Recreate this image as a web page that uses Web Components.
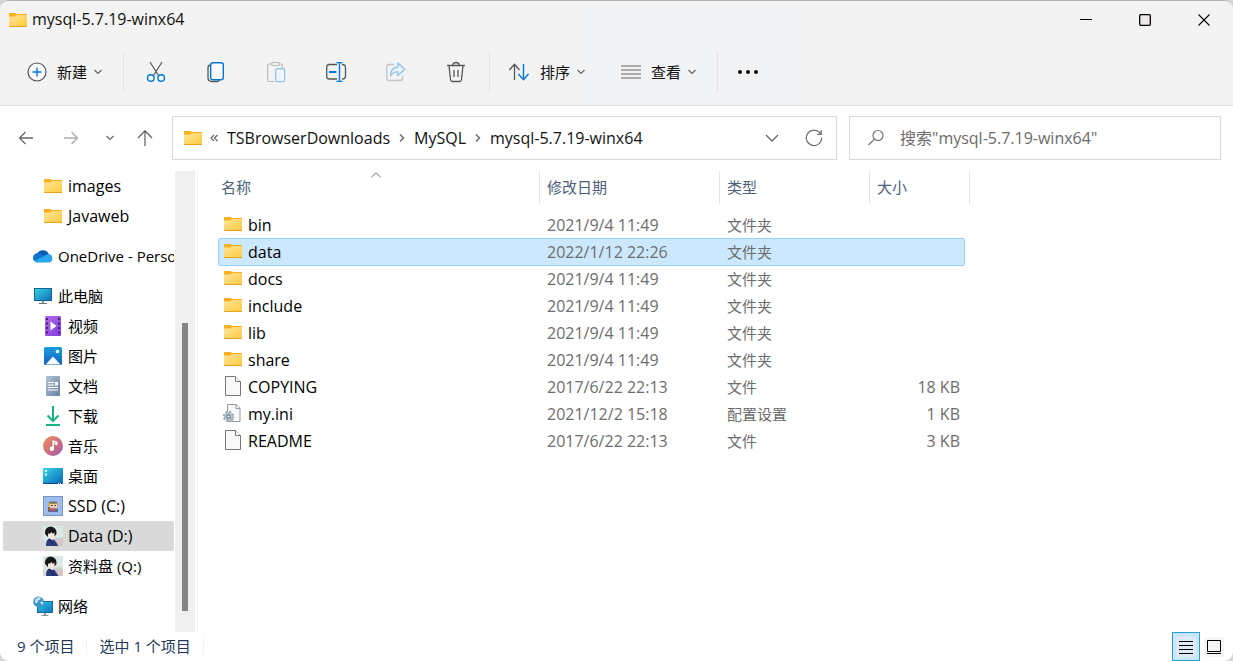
<!DOCTYPE html>
<html lang="zh-CN">
<head>
<meta charset="utf-8">
<title>mysql-5.7.19-winx64</title>
<style>
  html, body { margin: 0; height: 100%; }
  body { background: #d6d6d6; font: 16px/20px "Open Sans", "Noto Sans CJK SC", sans-serif; color: #111; overflow: hidden; }
</style>
</head>
<body>
<fe-window></fe-window>

<script>
const ICONS = {
  folder: [20, 20, `<defs><linearGradient id="g" x1="0" y1="0" x2="1" y2="1"><stop offset="0" stop-color="#ffe49a"/><stop offset="1" stop-color="#ffcb3d"/></linearGradient></defs>
    <path d="M1 6V3.500Q1 3 1.500 3H7q.5 0 .8.3L9 4h10v2z" fill="#f7ae20"/>
    <rect x="1" y="5" width="18" height="12" fill="url(#g)"/><path d="M1 6.500h6L9 5H1z" fill="#fbb01c"/><rect x="1" y="16" width="18" height="1" fill="#e9a21c"/>`],
  file: [20, 22, `<path d="M2.500 1.500h10l5 5v14h-15z" fill="#f9f9fa" stroke="#777"/><path d="M12.500 1.500v5h5" fill="#fff" stroke="#777"/>`],
  ini: [20, 22, `<path d="M4.500 2.500h9l3.500 3.500v13.500h-12.500z" fill="#f6f7f9" stroke="#999"/><path d="M13 2.500v4h4" fill="#fff" stroke="#999"/>
    <circle cx="5.500" cy="14.500" r="4.500" fill="#bcc6cf"/><circle cx="5.500" cy="14.500" r="4.700" fill="none" stroke="#9eabb6" stroke-width="2" stroke-dasharray="2 1.700"/><circle cx="5.500" cy="14.500" r="1.700" fill="#f3f5f7" stroke="#46515b"/>
    <circle cx="8.500" cy="18" r="2" fill="#aab4bd"/>`],
  plus: [20, 20, `<circle cx="10" cy="10" r="9" fill="#fafafa" stroke="#555" stroke-width="1.200"/><path d="M10 5.500v9M5.500 10h9" stroke="#0078d4" stroke-width="1.400"/>`],
  cut: [20, 22, `<path d="M4 1l8.800 14M16 1L7.200 15" stroke="#555" stroke-width="1.200" fill="none"/><circle cx="4.800" cy="17" r="3.300" fill="none" stroke="#0078d4" stroke-width="1.400"/><circle cx="15.200" cy="17" r="3.300" fill="none" stroke="#0078d4" stroke-width="1.400"/>`],
  copy: [20, 22, `<path d="M4 4q-2 .5-2 2.500v10q0 4 4 4h5q2 0 2.500-1.500" fill="none" stroke="#555" stroke-width="1.300"/><rect x="4.700" y="1.700" width="12.600" height="17" rx="2.300" fill="#fafafa" stroke="#0078d4" stroke-width="1.400"/>`],
  paste: [20, 22, `<g fill="none" stroke="#bbb" stroke-width="1.200"><path d="M6 3H3Q1.600 3 1.600 4.500v14.500q0 1.500 1.400 1.500h5M13 3h2q1.500 0 1.500 1.500V7"/><rect x="5.500" y="1.500" width="8" height="3" rx="1.500"/></g><rect x="9.700" y="7.700" width="9" height="13" rx="1.500" fill="#f0f5fa" stroke="#93c2ea" stroke-width="1.300"/>`],
  rename: [22, 22, `<path d="M12 3.500H4Q1.700 3.500 1.700 6v9.500Q1.700 18 4 18h8M17 3.500q3.500 0 3.500 3v8.500q0 3-3.500 3" fill="none" stroke="#555" stroke-width="1.300"/><path d="M4 11h7.500" stroke="#0078d4" stroke-width="2"/><path d="M14.500 2v18M11.500 1.600h6M11.500 20.400h6" stroke="#0078d4" stroke-width="1.400" fill="none"/>`],
  share: [22, 22, `<path d="M9 3.500H4Q1.700 3.500 1.700 6v11Q1.700 19.500 4 19.500h11q2.500 0 2.500-2.500v-2" fill="none" stroke="#c4c4c4" stroke-width="1.300"/><path d="M12.800 2l7 6.300-7 6.200v-3.700Q8 10.500 5.500 15q0-8.500 7.300-9z" fill="#eaf3fb" stroke="#93c2ea" stroke-width="1.300" stroke-linejoin="round"/>`],
  trash: [20, 22, `<path d="M1 4.500h18M6.800 4.500q0-3 3.200-3t3.200 3M3 4.500l1.500 14q.2 2 2 2h7q1.800 0 2-2l1.500-14M8 9v7M12 9v7" fill="none" stroke="#555" stroke-width="1.300"/>`],
  sort: [22, 20, `<path d="M6.500 18V2.500M1.300 8l5.200-5.700L11.500 8" fill="none" stroke="#555" stroke-width="1.300"/><path d="M15.500 2v15.500M10.300 12l5.200 5.700 5-5.700" fill="none" stroke="#0078d4" stroke-width="1.400"/>`],
  lines: [20, 18, `<path d="M0 3h20M0 7h20M0 11h20M0 15h20" stroke="#666" stroke-width="1.200"/>`],
  dots: [22, 6, `<g fill="#111"><circle cx="3" cy="3" r="2"/><circle cx="11" cy="3" r="2"/><circle cx="19" cy="3" r="2"/></g>`],
  down: [8, 6, `<path d="M.5 1l3.500 3.500L7.500 1" fill="none" stroke="#666" stroke-width="1.200"/>`],
  downbig: [14, 8, `<path d="M1 1l6 6 6-6" fill="none" stroke="#666" stroke-width="1.300"/>`],
  up: [10, 6, `<path d="M.5 5.200L5 .8l4.500 4.400" fill="none" stroke="#666"/>`],
  right: [6, 10, `<path d="M1 1.500L4.500 5 1 8.500" fill="none" stroke="#666" stroke-width="1.400"/>`],
  more: [8, 8, `<path d="M4 1L1 4l3 3M7.500 1l-3 3 3 3" fill="none" stroke="#666" stroke-width="1.200"/>`],
  back: [16, 16, `<path d="M15 8H1.500M7.500 2L1.500 8l6 6" fill="none" stroke="#666" stroke-width="1.300"/>`],
  forward: [16, 16, `<path d="M1 8h13.500M8.500 2l6 6-6 6" fill="none" stroke="#aaa" stroke-width="1.300"/>`],
  goup: [18, 18, `<path d="M9 17V1.700M2 9l7-7.300L16 9" fill="none" stroke="#666" stroke-width="1.300"/>`],
  refresh: [18, 18, `<path d="M16.700 8.800A7.700 7.700 0 1 1 14 3l1.800 1.700M16.200 1v4.300H12" fill="none" stroke="#707070" stroke-width="1.200"/>`],
  search: [18, 18, `<circle cx="11" cy="6.500" r="5" fill="none" stroke="#777" stroke-width="1.200"/><path d="M7.300 10.300L1.500 16" stroke="#777" stroke-width="1.200"/>`],
  min: [12, 12, `<path d="M0 5.500h12" stroke="#000"/>`],
  max: [12, 12, `<rect x=".7" y=".7" width="10.600" height="10.600" rx="1" fill="#ede9ec" stroke="#000" stroke-width="1.300"/>`],
  close: [12, 12, `<path d="M.5.5l11 11M11.500.5l-11 11" stroke="#111" stroke-width="1.200"/>`],
  cloud: [20, 20, `<path d="M4 8A6.500 6.500 0 0 1 15.500 7.500L17 15H3z" fill="#0a5fb4"/><circle cx="4.600" cy="11.800" r="4.600" fill="#0f73cf"/><path d="M4 7.200q3-.4 5 1.300l4 3-6 4H3z" fill="#0f73cf"/><path d="M15.200 8A4.300 4.300 0 0 1 16 16.500H5q-2 0-3.500-1.500L12 9.500z" fill="#28a8ea"/>`],
  pc: [20, 20, `<defs><linearGradient id="g" x1="0" y1="0" x2="1" y2="1"><stop offset="0" stop-color="#34d3e0"/><stop offset="1" stop-color="#0f6fc0"/></linearGradient></defs><rect x="1.500" y="2.500" width="17" height="12" fill="url(#g)" stroke="#16618f"/><path d="M9 15h2v2H9z" fill="#8a949c"/><path d="M6 17.500h8" stroke="#68737c"/>`],
  video: [20, 20, `<defs><linearGradient id="g" x1="0" y1="0" x2="1" y2="1"><stop offset="0" stop-color="#b86be8"/><stop offset="1" stop-color="#7a3ddc"/></linearGradient></defs><rect x="2" width="16" height="20" rx="1" fill="url(#g)"/><path d="M4 2v17M16 2v17" stroke="#43207a" stroke-width="2" stroke-dasharray="2 2.500"/><path d="M7.500 5.500l6 4.500-6 4.500z" fill="#fff"/>`],
  picture: [20, 20, `<defs><linearGradient id="g" x1="0" y1="0" x2="0" y2="1"><stop offset="0" stop-color="#1b9de2"/><stop offset="1" stop-color="#0f63bd"/></linearGradient></defs><rect x="1" y="1" width="18" height="18" rx="1.500" fill="url(#g)"/><path d="M2.500 18.500l7.500-8 7.500 8z" fill="#f4f9fd"/><circle cx="14.500" cy="5.500" r="1.700" fill="#fff"/>`],
  doc: [20, 20, `<defs><linearGradient id="g" x1="0" y1="0" x2="1" y2="1"><stop offset="0" stop-color="#b3c5d6"/><stop offset="1" stop-color="#647f9d"/></linearGradient></defs><rect x="3" width="14" height="20" rx="1" fill="url(#g)"/><path d="M5 6.500h6M5 9h6M5 11.500h10M5 14h10" stroke="#fff" stroke-width="1.200"/><rect x="12" y="6" width="3" height="3.500" fill="#fff"/>`],
  download: [20, 20, `<path d="M10 0v15M4.500 9.500L10 15l5.500-5.500" fill="none" stroke="#16b387" stroke-width="2"/><path d="M3 19h14" stroke="#16b387" stroke-width="2"/>`],
  music: [20, 20, `<defs><linearGradient id="g" x1="0" y1="0" x2="1" y2="1"><stop offset="0" stop-color="#f0905a"/><stop offset=".6" stop-color="#c86a82"/><stop offset="1" stop-color="#9a5fc0"/></linearGradient></defs><circle cx="10" cy="10" r="10" fill="url(#g)"/><circle cx="8.800" cy="12.800" r="2.200" fill="#fff"/><path d="M10.200 13V5l3.500 1.200v2l-2.300-.7" fill="none" stroke="#fff" stroke-width="1.500"/>`],
  desktop: [20, 20, `<defs><linearGradient id="g" x1="0" y1="0" x2="1" y2="1"><stop offset="0" stop-color="#35d6e0"/><stop offset="1" stop-color="#0b63bd"/></linearGradient></defs><rect y="2" width="20" height="16" rx="1" fill="url(#g)"/><path d="M0 17h20q0 1-1 1H1q-1 0-1-1z" fill="#0b4687"/><path d="M2 4h2v2H2zM2 7.500h2v2H2zM15 17h1v1h-1zM17 17h1v1h-1z" fill="#e8fbff"/>`],
  ssd: [20, 20, `<rect x=".5" y=".5" width="19" height="19" fill="#9dbcf0" stroke="#7c93bd"/><path d="M5 6l3 2 2-3 3 3 2-3v5H5z" fill="#e7b23d"/><path d="M6 5.500h8v2H6z" fill="#69707f"/><rect x="7" y="8" width="7" height="4.500" fill="#f2c9a8"/><path d="M8 9.500h1.500M11.500 9.500H13" stroke="#333"/><path d="M5 12.500h10V16H5z" fill="#5c6c96"/><path d="M8 12.500h4V15H8z" fill="#d05248"/><path d="M5 11h2v3H5z" fill="#a9503f"/>`],
  avatar: [20, 20, `<path d="M0 0h20v20H0z" fill="#dbe9e4"/><path d="M11 13h9v7h-9z" fill="#d9c6c4"/><path d="M12 12.500h8" stroke="#c2d4d4" stroke-width="2"/><path d="M0 14h4v6H0z" fill="#d7d9d6"/><path d="M4 5.500h8v5q-2 3-5 3z" fill="#f5e6df"/><path d="M2 8Q1.500 1 7.500.5 14 1 13.500 8l-2 2.500V6.500L9.500 8 9 6 6 8 5 7v4z" fill="#17171d"/><path d="M3 20q0-7 3.500-7.500L9 14l2-.5 2 2.500 2.500 4z" fill="#2c3c80"/><path d="M6 13l3 4 3 3" stroke="#182252" fill="none"/>`],
  network: [20, 20, `<defs><linearGradient id="g" x1="0" y1="0" x2="1" y2="1"><stop offset="0" stop-color="#31c8df"/><stop offset="1" stop-color="#0f70c2"/></linearGradient></defs><rect x="4.500" y="5.500" width="15" height="11" fill="url(#g)" stroke="#1a6c9c"/><path d="M11 17h2v2h-2z" fill="#8a949c"/><path d="M8.500 19.500h7" stroke="#87939b"/><circle cx="5.500" cy="5.800" r="5.300" fill="#3f94c4"/><path d="M2 3.500q2-2.500 5-2.500l1 2-3 1.500-1 3-2-1zM7 6l3-.5q.5 2-1 3.500z" fill="#c5e5ef"/>`],
  details: [20, 20, `<rect width="20" height="20" rx="2" fill="#dcebf4"/><path d="M3 4.500h14M3 8.500h14M3 12.500h14M3 16.500h14" stroke="#000"/>`],
  tiles: [20, 20, `<rect width="20" height="20" rx="2" fill="#f5f5f5"/><path d="M3.500 3.500h13v11h-13zM3 16.500h14" fill="none" stroke="#000"/>`]
};

/* Base class: puts the class's styles and markup in an open shadow root. */
class FeElement extends HTMLElement {
  connectedCallback() {
    if (this.shadowRoot) return;
    this.attachShadow({ mode: "open" }).innerHTML =
      `<style>*{box-sizing:border-box}button{font:inherit;color:inherit;border:0;background:none;padding:0;margin:0}${this.styles}</style>${this.markup()}`;
  }
}

customElements.define("fe-icon", class extends FeElement {
  styles = `:host{display:inline-flex;flex:none}svg{display:block}`;
  markup() {
    const [w, h, body] = ICONS[this.getAttribute("name")];
    return `<svg width="${w}" height="${h}" viewBox="0 0 ${w} ${h}" aria-hidden="true">${body}</svg>`;
  }
});

customElements.define("fe-titlebar", class extends FeElement {
  styles = `:host{display:flex;align-items:center;height:37px;padding-left:8px}
    h1{font:inherit;margin:0 0 0 4px;flex:1;padding-bottom:1px}
    button{width:59px;height:36px;display:flex;align-items:center;justify-content:center}`;
  markup() {
    return `<fe-icon name="folder"></fe-icon><h1><slot></slot></h1>
      <button aria-label="最小化"><fe-icon name="min"></fe-icon></button>
      <button aria-label="最大化"><fe-icon name="max"></fe-icon></button>
      <button aria-label="关闭"><fe-icon name="close"></fe-icon></button>`;
  }
});

customElements.define("fe-tool", class extends FeElement {
  styles = `:host{display:flex}
    button{display:flex;align-items:center;justify-content:center;min-width:60px;height:40px;font-size:15px}
    .text{gap:10px}.menu{margin-left:-3px}`;
  markup() {
    const label = this.textContent.trim();
    return `<button class="${label ? "text" : ""}" aria-label="${this.getAttribute("label") || label}"${this.hasAttribute("disabled") ? " disabled" : ""}>
      <fe-icon name="${this.getAttribute("icon")}"></fe-icon>${label ? `<slot></slot><fe-icon class="menu" name="down"></fe-icon>` : ""}</button>`;
  }
});

customElements.define("fe-commands", class extends FeElement {
  styles = `:host{display:flex;align-items:center;height:68px;border-bottom:1px solid #dedede}
    .group{display:flex;align-items:center;height:40px;border-right:1px solid #e2e2e2}
    .new{padding:0 21px 0 27px}.edit{padding:0 3px 0 2px}.view{padding:0 21px 0 18px;gap:36px}.group:last-child{border:0}`;
  markup() {
    return `<div class="group new"><fe-tool icon="plus">新建</fe-tool></div>
      <div class="group edit">
        <fe-tool icon="cut" label="剪切"></fe-tool><fe-tool icon="copy" label="复制"></fe-tool>
        <fe-tool icon="paste" label="粘贴" disabled></fe-tool><fe-tool icon="rename" label="重命名"></fe-tool>
        <fe-tool icon="share" label="共享" disabled></fe-tool><fe-tool icon="trash" label="删除"></fe-tool></div>
      <div class="group view"><fe-tool icon="sort">排序</fe-tool><fe-tool icon="lines">查看</fe-tool></div>
      <div class="group"><fe-tool icon="dots" label="更多"></fe-tool></div>`;
  }
});

customElements.define("fe-address", class extends FeElement {
  styles = `:host{display:flex;height:65px;padding:10px 12px 11px 18px;gap:12px}
    .history{display:flex;align-items:center;width:142px;gap:29px;flex:none}
    .history button{display:flex}.history button:nth-child(3){margin:0 -7px 0 -2px}
    .box{display:flex;align-items:center;border:1px solid #d9d9d9;background:#fff;height:44px}
    .path{flex:665 665 665px;padding:0 13px 0 10px;min-width:0}
    .path a{color:inherit;text-decoration:none;white-space:nowrap}
    .trail{display:flex;align-items:center;gap:9px;flex:1;padding-left:7px;min-width:0}
    .path button{display:flex;margin-left:26px}
    .find{flex:372 372 372px;padding-left:17px;gap:15px}
    input{flex:1;min-width:0;border:0;outline:0;padding:0;background:none;font:inherit}
    input::placeholder{color:#6b6b6b;opacity:1}`;
  markup() {
    return `<div class="history">
        <button aria-label="后退"><fe-icon name="back"></fe-icon></button>
        <button aria-label="前进" disabled><fe-icon name="forward"></fe-icon></button>
        <button aria-label="最近位置"><fe-icon name="down"></fe-icon></button>
        <button aria-label="向上"><fe-icon name="goup"></fe-icon></button></div>
      <div class="box path"><fe-icon name="folder"></fe-icon>
        <nav class="trail" aria-label="路径"><fe-icon name="more"></fe-icon><a href="#">TSBrowserDownloads</a><fe-icon name="right"></fe-icon>
        <a href="#">MySQL</a><fe-icon name="right"></fe-icon><a href="#">mysql-5.7.19-winx64</a></nav>
        <button aria-label="历史记录"><fe-icon name="downbig"></fe-icon></button>
        <button aria-label="刷新"><fe-icon name="refresh"></fe-icon></button></div>
      <label class="box find"><fe-icon name="search"></fe-icon><input type="text" aria-label="搜索" placeholder='搜索"mysql-5.7.19-winx64"'></label>`;
  }
});

customElements.define("fe-nav-item", class extends FeElement {
  styles = `:host{display:block}
    a{display:flex;align-items:center;gap:5px;height:30px;margin-left:3px;padding-left:40px;border-radius:2px;color:#000;text-decoration:none;white-space:nowrap;overflow:hidden}
    :host([root]) a{padding-left:30px}
    :host([small]) a{font-size:15px}
    :host([selected]) a{background:#d9d9d9}
    :host([root]){margin-top:10px}`;
  markup() { return `<a href="#"><fe-icon name="${this.getAttribute("icon")}"></fe-icon><slot></slot></a>`; }
});

customElements.define("fe-nav", class extends FeElement {
  styles = `:host{display:flex;width:198px;flex:none;overflow:hidden;border-right:1px solid #f3f3f3}
    nav{width:174px;overflow:hidden}
    .bar{width:20px;margin-left:1px;background:#f0f0f0;display:flex;flex-direction:column;align-items:center}
    .bar::before{content:"";flex:152}
    .thumb{width:6px;flex:288;background:#858585}
    .bar::after{content:"";flex:21}`;
  markup() { return `<nav aria-label="文件夹"><slot></slot></nav><div class="bar"><div class="thumb"></div></div>`; }
});

customElements.define("fe-files", class extends FeElement {
  styles = `:host{display:block;flex:1;min-width:0;padding-left:20px}
    table,thead,tbody{display:block}
    table{width:752px}
    tr{display:grid;grid-template-columns:322px 180px 150px 1fr}
    th{height:33px;border-right:1px solid #e4e4e4;text-align:left;font-weight:400;font-size:15px;line-height:33px;padding:0 0 0 7px;color:#4c607a;position:relative}
    th:first-child{padding-left:3px}
    th fe-icon{position:absolute;left:153px;top:1px}
    tbody{padding-top:7px;width:747px}
    tbody tr{height:28px;margin-bottom:-1px;border:1px solid transparent;border-radius:2px}
    tbody tr.on{background:#cce8ff;border-color:#99d1ff}
    td{padding:0 0 0 6px;height:26px;line-height:26px;color:#6d6d6d;white-space:nowrap}
    td:first-child{display:flex;align-items:center;gap:5px;padding-left:4px;color:#000}
    td fe-icon{margin-bottom:2px}
    td:nth-child(3){font-size:15px}
    td:last-child{text-align:right;padding-right:4px}`;
  markup() {
    const rows = [
      ["folder", "bin", "2021/9/4 11:49", "文件夹", ""],
      ["folder", "data", "2022/1/12 22:26", "文件夹", "", "on"],
      ["folder", "docs", "2021/9/4 11:49", "文件夹", ""],
      ["folder", "include", "2021/9/4 11:49", "文件夹", ""],
      ["folder", "lib", "2021/9/4 11:49", "文件夹", ""],
      ["folder", "share", "2021/9/4 11:49", "文件夹", ""],
      ["file", "COPYING", "2017/6/22 22:13", "文件", "18 KB"],
      ["ini", "my.ini", "2021/12/2 15:18", "配置设置", "1 KB"],
      ["file", "README", "2017/6/22 22:13", "文件", "3 KB"]];
    return `<table><thead><tr><th>名称<fe-icon name="up"></fe-icon></th><th>修改日期</th><th>类型</th><th>大小</th></tr></thead><tbody>${
      rows.map(([i, n, d, t, s, c = ""]) => `<tr class="${c}"><td><fe-icon name="${i}"></fe-icon>${n}</td><td>${d}</td><td>${t}</td><td>${s}</td></tr>`).join("")
    }</tbody></table>`;
  }
});

customElements.define("fe-status", class extends FeElement {
  styles = `:host{display:flex;align-items:center;height:29px;padding-left:17px;font-size:15px;color:#22375a}
    span{padding-right:12px;margin:0 12px 2px 0;border-right:1px solid #f1f1f1;height:16px;line-height:16px}
    .views{margin-left:auto;display:flex;padding-right:5px}
    button{width:28px;height:29px;display:flex;align-items:center;justify-content:center}
    .on{border:1px solid #26a0da;background:#cbe6f6}`;
  markup() {
    return `<span>9 个项目</span><span>选中 1 个项目</span><div class="views">
      <button class="on" aria-label="详细信息"><fe-icon name="details"></fe-icon></button>
      <button aria-label="大图标"><fe-icon name="tiles"></fe-icon></button></div>`;
  }
});

customElements.define("fe-window", class extends FeElement {
  styles = `:host{display:flex;flex-direction:column;height:100%;background:#fff;border-top:1px solid #b2b2b2;border-radius:9px;overflow:hidden;box-sizing:border-box}
    header{background:linear-gradient(90deg,#f3f3f3 40%,#f1f3f5 55%,#f3f3f3 75%)}
    main{flex:1;display:flex;min-height:0}`;
  markup() {
    return `<header><fe-titlebar>mysql-5.7.19-winx64</fe-titlebar><fe-commands></fe-commands></header>
      <fe-address></fe-address>
      <main><fe-nav>
        <fe-nav-item icon="folder">images</fe-nav-item>
        <fe-nav-item icon="folder">Javaweb</fe-nav-item>
        <fe-nav-item icon="cloud" root small>OneDrive - Personal</fe-nav-item>
        <fe-nav-item icon="pc" root small>此电脑</fe-nav-item>
        <fe-nav-item icon="video" small>视频</fe-nav-item>
        <fe-nav-item icon="picture" small>图片</fe-nav-item>
        <fe-nav-item icon="doc" small>文档</fe-nav-item>
        <fe-nav-item icon="download" small>下载</fe-nav-item>
        <fe-nav-item icon="music" small>音乐</fe-nav-item>
        <fe-nav-item icon="desktop" small>桌面</fe-nav-item>
        <fe-nav-item icon="ssd">SSD (C:)</fe-nav-item>
        <fe-nav-item icon="avatar" selected>Data (D:)</fe-nav-item>
        <fe-nav-item icon="avatar" small>资料盘 (Q:)</fe-nav-item>
        <fe-nav-item icon="network" root small>网络</fe-nav-item>
      </fe-nav><fe-files></fe-files></main>
      <fe-status></fe-status>`;
  }
});
</script>
</body>
</html>
